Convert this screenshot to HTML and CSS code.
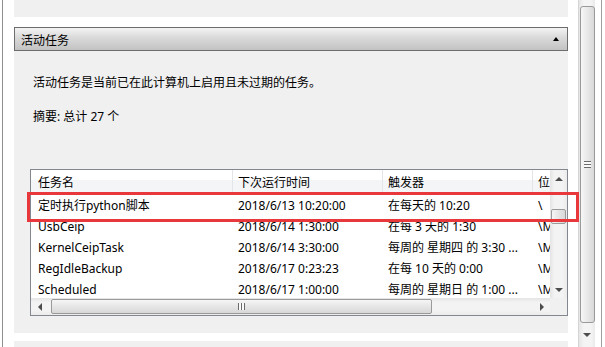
FILE: index.html
```html
<!DOCTYPE html>
<html lang="zh-CN">
<head>
    <meta charset="UTF-8">
    <meta name="viewport" content="width=device-width, initial-scale=1.0">
    <title>活动任务</title>
    <link rel="stylesheet" href="styles.css">
</head>
<body>
    <div class="window">
        <div class="main">
            <div class="top-panel"></div>

            <div class="section-header">
                <span class="section-title">活动任务</span>
                <span class="arrow arrow-up collapse"></span>
            </div>

            <div class="section-body">
                <p class="desc">活动任务是当前已在此计算机上启用且未过期的任务。</p>
                <p class="summary">摘要: 总计 27 个</p>

                <div class="listview">
                    <div class="lv-main">
                        <div class="lv-content">
                            <div class="lv-header">
                                <div class="cell col-name">任务名</div>
                                <div class="cell col-next">下次运行时间</div>
                                <div class="cell col-trigger">触发器</div>
                                <div class="cell col-loc">位置</div>
                            </div>
                            <div class="lv-row">
                                <div class="cell col-name">定时执行python脚本</div>
                                <div class="cell col-next">2018/6/13 10:20:00</div>
                                <div class="cell col-trigger">在每天的 10:20</div>
                                <div class="cell col-loc">\</div>
                            </div>
                            <div class="lv-row">
                                <div class="cell col-name">UsbCeip</div>
                                <div class="cell col-next">2018/6/14 1:30:00</div>
                                <div class="cell col-trigger">在每 3 天的 1:30</div>
                                <div class="cell col-loc">\Microsoft</div>
                            </div>
                            <div class="lv-row">
                                <div class="cell col-name">KernelCeipTask</div>
                                <div class="cell col-next">2018/6/14 3:30:00</div>
                                <div class="cell col-trigger">每周的 星期四 的 3:30 ...</div>
                                <div class="cell col-loc">\Microsoft</div>
                            </div>
                            <div class="lv-row">
                                <div class="cell col-name">RegIdleBackup</div>
                                <div class="cell col-next">2018/6/17 0:23:23</div>
                                <div class="cell col-trigger">在每 10 天的 0:00</div>
                                <div class="cell col-loc">\Microsoft</div>
                            </div>
                            <div class="lv-row">
                                <div class="cell col-name">Scheduled</div>
                                <div class="cell col-next">2018/6/17 1:00:00</div>
                                <div class="cell col-trigger">每周的 星期日 的 1:00 ...</div>
                                <div class="cell col-loc">\Microsoft</div>
                            </div>
                        </div>

                        <div class="vscroll">
                            <div class="sb-btn"><span class="arrow arrow-up"></span></div>
                            <div class="vtrack">
                                <div class="vthumb small-thumb"></div>
                            </div>
                            <div class="sb-btn"><span class="arrow arrow-down"></span></div>
                        </div>
                    </div>

                    <div class="lv-bottom">
                        <div class="hscroll">
                            <div class="sb-btn"><span class="arrow arrow-left"></span></div>
                            <div class="htrack">
                                <div class="hthumb"><span class="grip-v"></span></div>
                            </div>
                            <div class="sb-btn"><span class="arrow arrow-right"></span></div>
                        </div>
                        <div class="corner"></div>
                    </div>
                </div>

                <div class="highlight"></div>
            </div>

            <div class="bottom-panel"></div>
        </div>

        <div class="page-scroll">
            <div class="page-thumb"><span class="grip-h"></span></div>
            <div class="page-down"><span class="arrow arrow-down"></span></div>
        </div>

        <div class="edge"></div>
    </div>
</body>
</html>
```

FILE: styles.css
```css
body {
    margin: 0;
    background-color: #fff;
    font-family: "Noto Sans", "Noto Sans CJK SC", sans-serif;
    font-size: 12px;
    color: #000;
}

.window {
    display: flex;
    height: 347px;
    overflow: hidden;
}

/* left content column */
.main {
    margin-left: 2px;
    border-left: 1px solid #8e8e8e;
    width: 578px;
    box-sizing: border-box;
    padding: 0 10px 0 11px;
    display: flex;
    flex-direction: column;
}

.top-panel {
    height: 17px;
    background-color: #f0f0f0;
}

.section-header {
    margin-top: 10px;
    height: 24px;
    box-sizing: border-box;
    border: 1px solid #6d6d6d;
    background: linear-gradient(#f3f3f3, #d9d9d9 45%, #c3c3c3);
    display: flex;
    align-items: center;
    justify-content: space-between;
    padding: 0 8px 0 6px;
}

.section-title {
    font-family: "Noto Sans CJK SC", sans-serif;
    line-height: 16px;
    margin-top: 1px;
}

.section-body {
    position: relative;
    height: 282px;
    box-sizing: border-box;
    background-color: #f0f0f0;
    padding-top: 24px;
}

.desc,
.summary {
    margin: 0 0 0 19px;
    line-height: 16px;
    white-space: nowrap;
}

.summary {
    margin-top: 18px;
}

/* list view */
.listview {
    margin: 44px 0 0 16px;
    width: 538px;
    height: 147px;
    box-sizing: border-box;
    border: 1px solid #828790;
    background-color: #fff;
    display: flex;
    flex-direction: column;
}

.lv-main {
    display: flex;
    height: 128px;
}

.lv-content {
    width: 519px;
    overflow: hidden;
}

.lv-header,
.lv-row {
    display: flex;
    white-space: nowrap;
}

.lv-header {
    height: 25px;
    background: linear-gradient(#fff 40%, #f4f5f7 40%);
}

.lv-row {
    height: 21px;
}

.cell {
    box-sizing: border-box;
    flex-shrink: 0;
    overflow: hidden;
    padding-left: 5px;
    line-height: 21px;
}

.lv-header .cell {
    line-height: 25px;
    border-right: 1px solid #e3e5e8;
}

.col-name {
    width: 202px;
    padding-left: 7px;
}

.col-next,
.col-trigger {
    width: 150px;
}

.col-loc {
    width: 150px;
}

/* scrollbars */
.vscroll {
    width: 17px;
    display: flex;
    flex-direction: column;
    background: linear-gradient(to right, #e4e4e4, #f3f3f3 25%, #f3f3f3 75%, #ebebeb);
}

.sb-btn {
    width: 17px;
    height: 17px;
    flex-shrink: 0;
    display: flex;
    align-items: center;
    justify-content: center;
}

.vtrack {
    flex: 1;
}

.vthumb {
    margin: 22px 0 0 1px;
    width: 15px;
    height: 15px;
    box-sizing: border-box;
    border: 1px solid #9a9a9a;
    border-radius: 2px;
    background: linear-gradient(to right, #f6f6f6, #e6e6e6 50%, #d8d8d8);
}

.lv-bottom {
    display: flex;
    height: 17px;
}

.hscroll {
    width: 519px;
    display: flex;
    background: linear-gradient(#e4e4e4, #f3f3f3 25%, #f3f3f3 75%, #ebebeb);
}

.htrack {
    flex: 1;
}

.hthumb {
    margin: 1px 0 0 3px;
    width: 381px;
    height: 15px;
    box-sizing: border-box;
    border: 1px solid #9a9a9a;
    border-radius: 2px;
    background: linear-gradient(#f6f6f6, #e6e6e6 50%, #d8d8d8);
    display: flex;
    align-items: center;
    justify-content: center;
}

.grip-v {
    width: 7px;
    height: 7px;
    background: repeating-linear-gradient(to right, #6b6b6b 0 1px, #fafafa 1px 3px);
}

.corner {
    width: 17px;
    background-color: #f0f0f0;
}

.arrow {
    width: 0;
    height: 0;
    border-style: solid;
    border-color: transparent;
}

.arrow-up {
    border-width: 0 4px 4px;
    border-bottom-color: #4d4d4d;
}

.arrow-down {
    border-width: 4px 4px 0;
    border-top-color: #4d4d4d;
}

.arrow-left {
    border-width: 4px 4px 4px 0;
    border-right-color: #4d4d4d;
}

.arrow-right {
    border-width: 4px 0 4px 4px;
    border-left-color: #4d4d4d;
}

.collapse {
    border-width: 0 3px 4px;
    border-bottom-color: #000;
}

/* red annotation frame */
.highlight {
    position: absolute;
    left: 13px;
    top: 141px;
    width: 552px;
    height: 30px;
    box-sizing: border-box;
    border: 3px solid #e8383b;
}

.bottom-panel {
    margin-top: 8px;
    flex: 1;
    background-color: #f0f0f0;
}

/* page scrollbar */
.page-scroll {
    width: 17px;
    box-sizing: border-box;
    border-left: 1px solid #d4d4d4;
    background: linear-gradient(to right, #e6e6e6, #f4f4f4 30%, #f4f4f4 75%, #eaeaea);
    display: flex;
    flex-direction: column;
}

.page-thumb {
    margin: 6px 0 0 1px;
    width: 15px;
    height: 317px;
    box-sizing: border-box;
    border: 1px solid #9a9a9a;
    border-radius: 3px;
    background: linear-gradient(to right, #f7f7f7, #e8e8e8 50%, #d9d9d9);
    display: flex;
    align-items: center;
    justify-content: center;
}

.grip-h {
    width: 7px;
    height: 7px;
    background: repeating-linear-gradient(#6b6b6b 0 1px, #fafafa 1px 3px);
}

.page-down {
    height: 17px;
    margin-top: 3px;
    display: flex;
    align-items: center;
    justify-content: center;
}

.edge {
    width: 7px;
    box-sizing: border-box;
    border-right: 1px solid #a0a0a0;
    margin-right: 3px;
}
```
